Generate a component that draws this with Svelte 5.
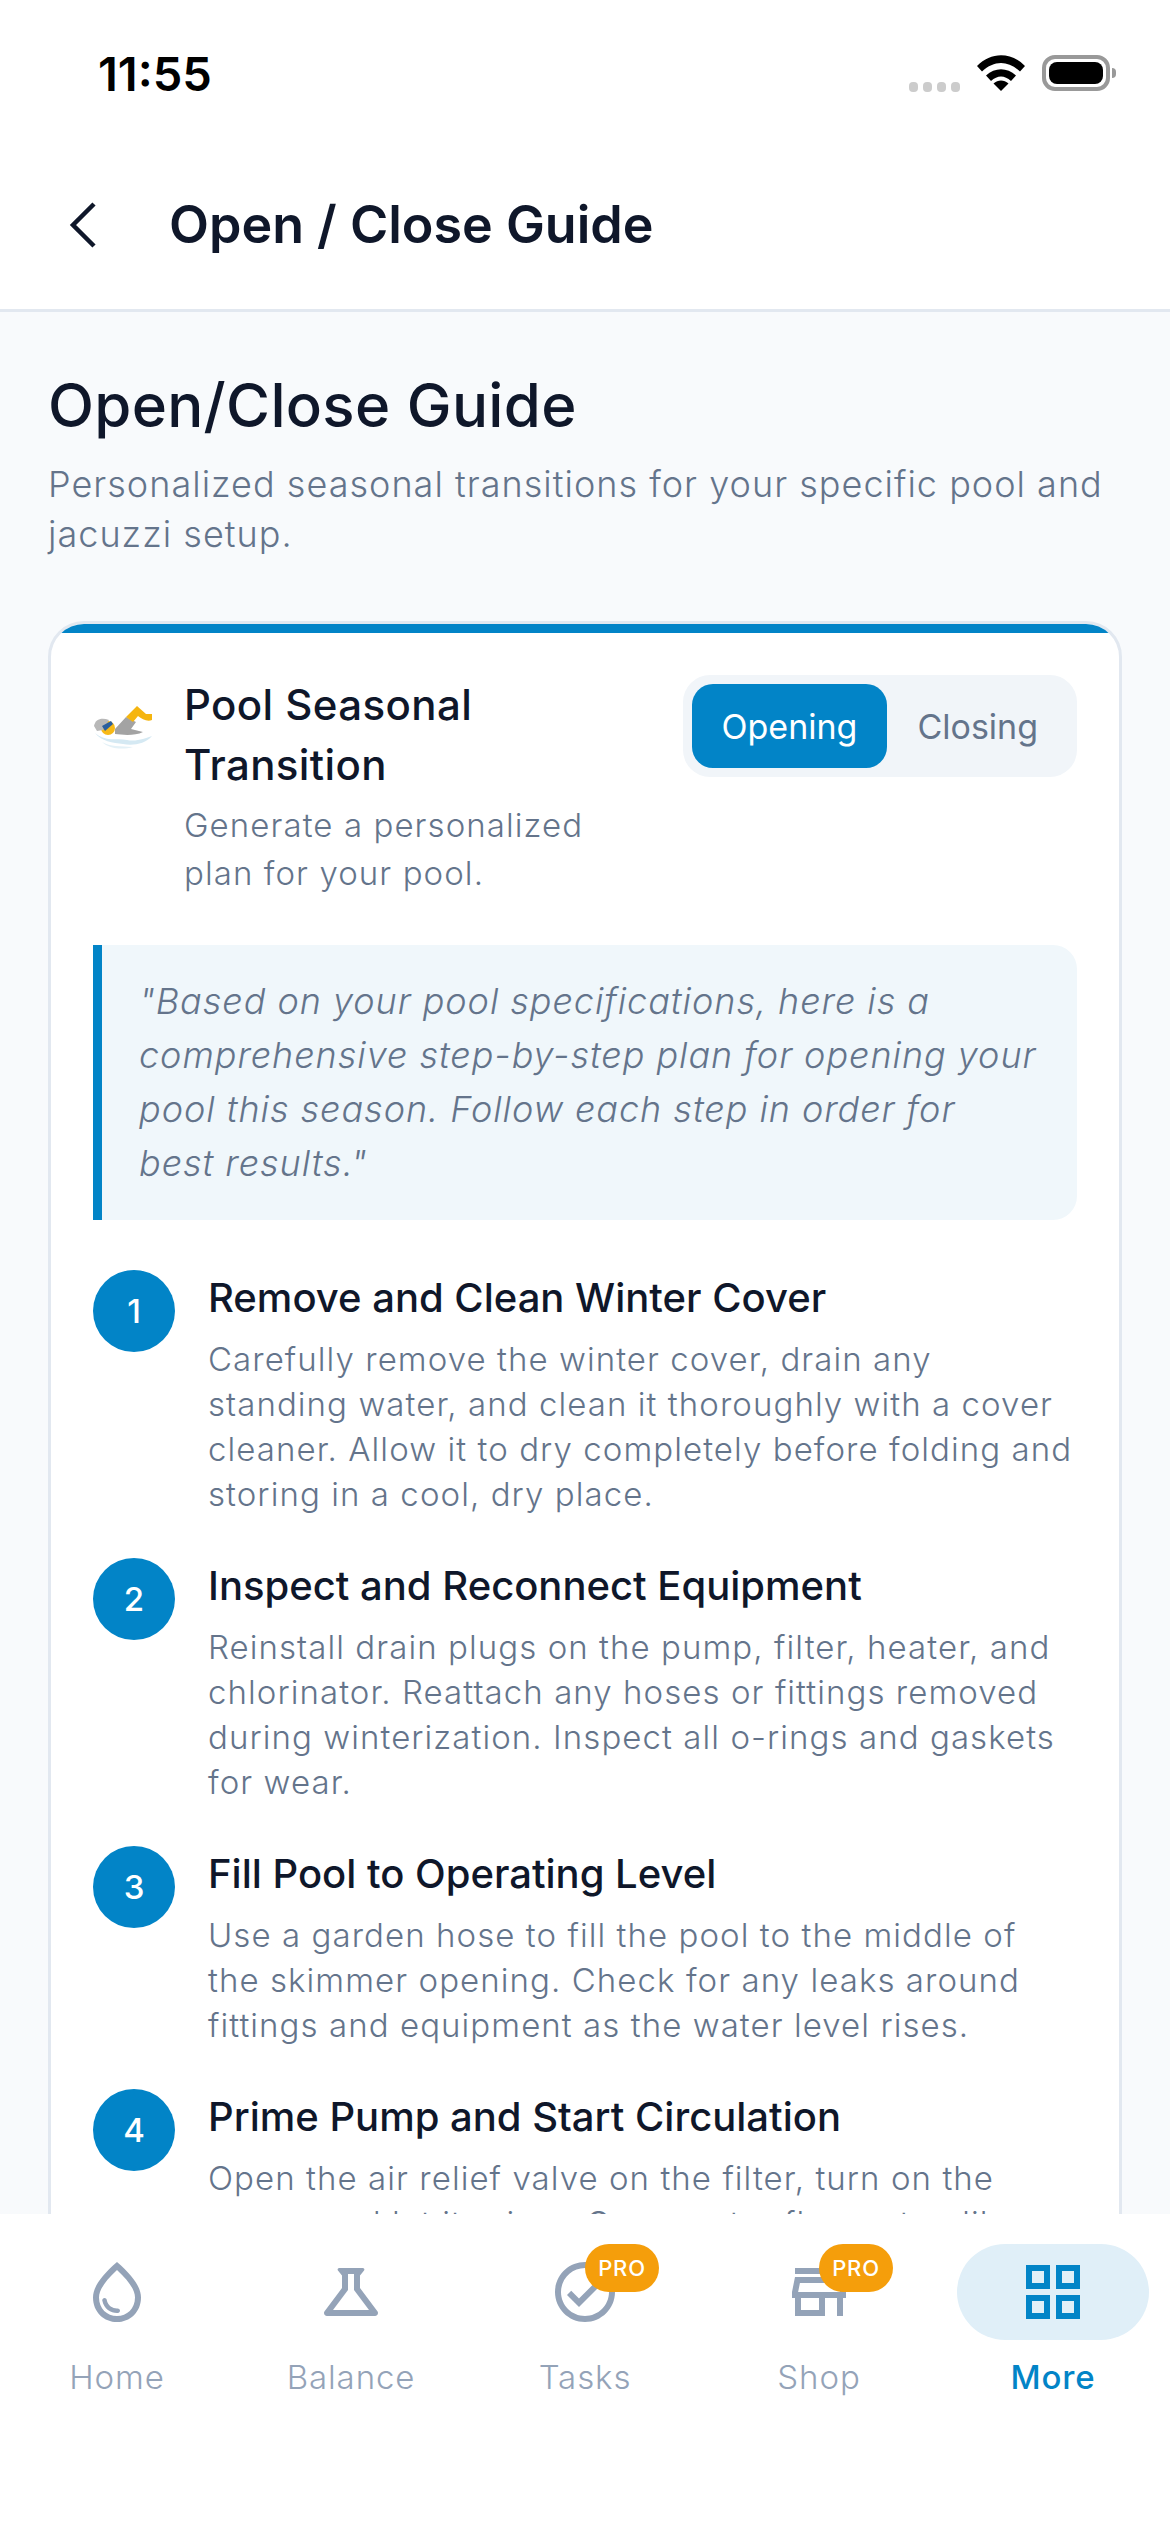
<script lang="ts">
  interface Step {
    title: string;
    body: string;
  }

  const steps: Step[] = [
    {
      title: 'Remove and Clean Winter Cover',
      body: 'Carefully remove the winter cover, drain any standing water, and clean it thoroughly with a cover cleaner. Allow it to dry completely before folding and storing in a cool, dry place.'
    },
    {
      title: 'Inspect and Reconnect Equipment',
      body: 'Reinstall drain plugs on the pump, filter, heater, and chlorinator. Reattach any hoses or fittings removed during winterization. Inspect all o-rings and gaskets for wear.'
    },
    {
      title: 'Fill Pool to Operating Level',
      body: 'Use a garden hose to fill the pool to the middle of the skimmer opening. Check for any leaks around fittings and equipment as the water level rises.'
    },
    {
      title: 'Prime Pump and Start Circulation',
      body: 'Open the air relief valve on the filter, turn on the pump, and let it prime. Once water flows steadily and pressure is normal, run the system for a full day.'
    }
  ];

  const tabs = [
    { label: 'Home', path: 'M12,2c-5.33,4.55-8,8.48-8,11.8c0,4.98,3.8,8.2,8,8.2s8-3.22,8-8.2C20,10.48,17.33,6.55,12,2z M12,20c-3.35,0-6-2.57-6-6.2c0-2.34,1.95-5.44,6-9.14c4.05,3.7,6,6.79,6,9.14C18,17.43,15.35,20,12,20z M7.83,14c0.37,0,0.67,0.26,0.74,0.62c0.41,2.22,2.28,2.98,3.64,2.87c0.43-0.02,0.79,0.32,0.79,0.75c0,0.4-0.32,0.73-0.72,0.75c-2.13,0.13-4.62-1.09-5.19-4.12C7.01,14.42,7.37,14,7.83,14z' },
    { label: 'Balance', path: 'M13,11.33L18,18H6l5-6.67V6h2V11.33z M15.96,4H8.04C7.62,4,7.39,4.48,7.65,4.81L9,6.5v4.17L3.2,18.4C2.71,19.06,3.18,20,4,20h16c0.82,0,1.29-0.94,0.8-1.6L15,10.67V6.5l1.35-1.69C16.61,4.48,16.38,4,15.96,4z' },
    { label: 'Tasks', pro: true, path: 'M12 2C6.48 2 2 6.48 2 12s4.48 10 10 10 10-4.48 10-10S17.52 2 12 2zm0 18c-4.41 0-8-3.59-8-8s3.59-8 8-8 8 3.59 8 8-3.59 8-8 8zm4.59-12.42L10 14.17l-2.59-2.58L6 13l4 4 8-8z' },
    { label: 'Shop', pro: true, path: 'M20 4H4v2h16V4zm1 10v-2l-1-5H4l-1 5v2h1v6h10v-6h4v6h2v-6h1zm-9 4H6v-4h6v4zm-6.96-6l.6-3h12.72l.6 3H5.04z' },
    { label: 'More', active: true, path: 'M3 3v8h8V3H3zm6 6H5V5h4v4zm-6 4v8h8v-8H3zm6 6H5v-4h4v4zm4-16v8h8V3h-8zm6 6h-4V5h4v4zm-6 4v8h8v-8h-8zm6 6h-4v-4h4v4z' }
  ];
</script>

<div class="screen">
  <div class="status">
    <span class="time">11:55</span>
    <div class="status-icons">
      <div class="dots"><i></i><i></i><i></i><i></i></div>
      <svg class="wifi" viewBox="0 0 48 36" width="48" height="36">
        <path d="M0 11 C14 -3.5 34 -3.5 48 11 L43 16.5 C31 5 17 5 5 16.5 Z" />
        <path d="M9 20.5 C18 12 30 12 39 20.5 L34 26 C27.5 20 20.5 20 14 26 Z" />
        <path d="M24 36 L16.5 28.5 C21 24.5 27 24.5 31.5 28.5 Z" />
      </svg>
      <div class="battery"><b></b></div>
    </div>
  </div>

  <header class="topbar">
    <svg class="back" viewBox="0 0 30 48" width="30" height="48">
      <path d="M26 3 L5 24 L26 45" />
    </svg>
    <h2>Open / Close Guide</h2>
  </header>

  <main class="content">
    <h1>Open/Close Guide</h1>
    <p class="lead">Personalized seasonal transitions for your specific pool and jacuzzi setup.</p>

    <section class="card">
      <div class="card-head">
        <svg class="swimmer" viewBox="0 0 60 44" width="60" height="44">
          <path class="wave" d="M2 28 C12 37 24 33 34 35 C44 37 52 33 59 31 C52 39 40 41 30 39 C20 38 8 36 2 28 Z" />
          <path class="wave2" d="M9 37 C17 42 28 41 40 42 C30 45 16 44 9 37 Z" />
          <path class="body" d="M22 24 L33 12 L43 17 L38 24 L50 27 C42 31 30 30 22 29 Z" />
          <path class="leg" d="M33 12 L44 1 L53 9 L59 9 L59 15 C54 17 49 14 45 11 L40 17 Z" />
          <circle class="head" cx="15" cy="23" r="7" />
          <path class="cap" d="M1 21 C2 14 9 12 16 15 L10 25 L4 26 Z" />
          <path class="goggle" d="M9 21 L18 16 L20 19 L12 26 Z" />
        </svg>
        <div class="head-text">
          <h3>Pool Seasonal Transition</h3>
          <p>Generate a personalized plan for your pool.</p>
        </div>
        <div class="toggle">
          <span class="seg on">Opening</span>
          <span class="seg">Closing</span>
        </div>
      </div>

      <blockquote>"Based on your pool specifications, here is a comprehensive step-by-step plan for opening your pool this season. Follow each step in order for best results."</blockquote>

      <ol class="steps">
        {#each steps as step, i}
          <li>
            <span class="num">{i + 1}</span>
            <div class="step-text">
              <h4>{step.title}</h4>
              <p>{step.body}</p>
            </div>
          </li>
        {/each}
      </ol>
    </section>
  </main>

  <nav class="tabs">
    {#each tabs as tab}
      <div class="tab" class:active={tab.active}>
        <div class="icon-wrap">
          <svg viewBox="0 0 24 24" width="72" height="72"><path d={tab.path} /></svg>
          {#if tab.pro}<span class="pro">PRO</span>{/if}
        </div>
        <span class="label">{tab.label}</span>
      </div>
    {/each}
  </nav>
</div>

<style>
  :global(body) {
    margin: 0;
    background: #fff;
  }

  .screen {
    width: 1170px;
    height: 2532px;
    display: flex;
    flex-direction: column;
    overflow: hidden;
    font-family: Inter, 'Liberation Sans', sans-serif;
    color: #0f172a;
  }

  .status {
    height: 132px;
    flex: none;
    display: flex;
    justify-content: space-between;
    align-items: flex-start;
    padding: 0 60px 0 98px;
    box-sizing: border-box;
    background: #fff;
  }

  .time {
    margin-top: 47px;
    font-size: 47px;
    font-weight: 600;
    line-height: 54px;
    color: #000;
  }

  .status-icons {
    display: flex;
    align-items: flex-start;
    margin-top: 55px;
  }

  .dots {
    display: flex;
    gap: 5px;
    margin-top: 27px;
    margin-right: 17px;
  }

  .dots i {
    width: 9px;
    height: 10px;
    border-radius: 4px;
    background: #ccc;
  }

  .wifi {
    fill: #000;
    margin-right: 17px;
  }

  .battery {
    position: relative;
    width: 68px;
    height: 36px;
    box-sizing: border-box;
    border: 4px solid #999;
    border-radius: 13px;
    padding: 3px;
  }

  .battery b {
    display: block;
    height: 100%;
    border-radius: 8px;
    background: #000;
  }

  .battery::after {
    content: '';
    position: absolute;
    right: -10px;
    top: 9px;
    width: 4px;
    height: 10px;
    border-radius: 0 5px 5px 0;
    background: #999;
  }

  .topbar {
    height: 180px;
    flex: none;
    display: flex;
    align-items: center;
    gap: 71px;
    padding: 8px 0 0 68px;
    box-sizing: border-box;
    background: #fff;
    border-bottom: 3px solid #e2e8f0;
  }

  .back {
    fill: none;
    stroke: #0f172a;
    stroke-width: 4.5;
  }

  .topbar h2 {
    margin: 0;
    font-size: 52px;
    font-weight: 600;
    line-height: 60px;
  }

  .content {
    flex: 1;
    min-height: 0;
    overflow: hidden;
    background: #f8fafc;
    padding: 57px 48px 0;
  }

  h1 {
    margin: 0;
    font-size: 60px;
    font-weight: 500;
    line-height: 72px;
    letter-spacing: 0.3px;
  }

  .lead {
    margin: 18px 0 0;
    font-size: 36px;
    font-weight: 350;
    line-height: 50px;
    letter-spacing: 1.02px;
    color: #64748b;
  }

  .card {
    margin-top: 62px;
    background: #fff;
    border: 3px solid #e2e8f0;
    border-radius: 36px;
    overflow: hidden;
    padding: 0 42px;
    position: relative;
  }

  .card::before {
    content: '';
    display: block;
    height: 9px;
    margin: 0 -42px;
    background: #0284c7;
  }

  .card-head {
    display: flex;
    align-items: flex-start;
    margin-top: 42px;
  }

  .swimmer {
    flex: none;
    margin-top: 30px;
    margin-right: 31px;
  }

  .swimmer .wave { fill: #d5e9f3; }
  .swimmer .wave2 { fill: #e4f1f7; }
  .swimmer .body { fill: #a3a3a3; }
  .swimmer .leg { fill: #f5b50f; }
  .swimmer .head { fill: #f7b916; }
  .swimmer .cap { fill: #b8b8b8; }
  .swimmer .goggle { fill: #2a5f9e; }

  .head-text {
    width: 410px;
  }

  .head-text h3 {
    margin: 0;
    font-size: 42px;
    font-weight: 500;
    line-height: 60px;
    letter-spacing: 0.4px;
  }

  .head-text p {
    margin: 6px 0 0;
    font-size: 33px;
    font-weight: 350;
    line-height: 48px;
    letter-spacing: 1.08px;
    color: #64748b;
  }

  .toggle {
    margin-left: auto;
    display: flex;
    padding: 9px;
    background: #f1f5f9;
    border-radius: 27px;
  }

  .seg {
    height: 84px;
    display: flex;
    align-items: center;
    padding: 0 30px;
    border-radius: 21px;
    font-size: 34px;
    color: #64748b;
  }

  .seg.on {
    background: #0284c7;
    color: #fff;
  }

  blockquote {
    margin: 48px 0 0;
    padding: 29px 38px 30px 37px;
    border-left: 9px solid #0284c7;
    border-radius: 0 24px 24px 0;
    background: #f0f7fb;
    font-size: 36px;
    font-style: italic;
    font-weight: 350;
    line-height: 54px;
    letter-spacing: 0.95px;
    color: #64748b;
  }

  .steps {
    list-style: none;
    margin: 50px 0 0;
    padding: 0;
  }

  .steps li {
    display: flex;
    gap: 33px;
    margin-bottom: 41px;
  }

  .num {
    flex: none;
    width: 82px;
    height: 82px;
    border-radius: 50%;
    background: #0284c7;
    color: #fff;
    display: flex;
    align-items: center;
    justify-content: center;
    font-size: 33px;
    font-weight: 500;
  }

  .step-text h4 {
    margin: 0;
    font-size: 40px;
    font-weight: 500;
    line-height: 56px;
  }

  .step-text p {
    margin: 11px 0 0;
    font-size: 33px;
    font-weight: 350;
    line-height: 45px;
    letter-spacing: 1.07px;
    color: #64748b;
  }

  .tabs {
    height: 318px;
    flex: none;
    display: grid;
    grid-template-columns: repeat(5, 234px);
    background: #fff;
    box-sizing: border-box;
    padding-top: 30px;
  }

  .tab {
    display: flex;
    flex-direction: column;
    align-items: center;
    color: #94a3b8;
  }

  .icon-wrap {
    position: relative;
    width: 192px;
    height: 96px;
    border-radius: 48px;
    display: flex;
    align-items: center;
    justify-content: center;
  }

  .icon-wrap svg {
    fill: currentColor;
  }

  .tab.active .icon-wrap {
    background: #e0eff8;
  }

  .tab.active {
    color: #0284c7;
  }

  .tab.active .label {
    font-weight: 500;
  }

  .pro {
    position: absolute;
    left: 96px;
    top: 0;
    width: 74px;
    height: 48px;
    border-radius: 24px;
    background: #f59e0b;
    color: #fff;
    display: flex;
    align-items: center;
    justify-content: center;
    font-size: 22px;
    font-weight: 500;
    letter-spacing: 0.8px;
  }

  .label {
    margin-top: 16px;
    font-size: 33px;
    font-weight: 350;
    line-height: 42px;
    letter-spacing: 0.9px;
  }
</style>
